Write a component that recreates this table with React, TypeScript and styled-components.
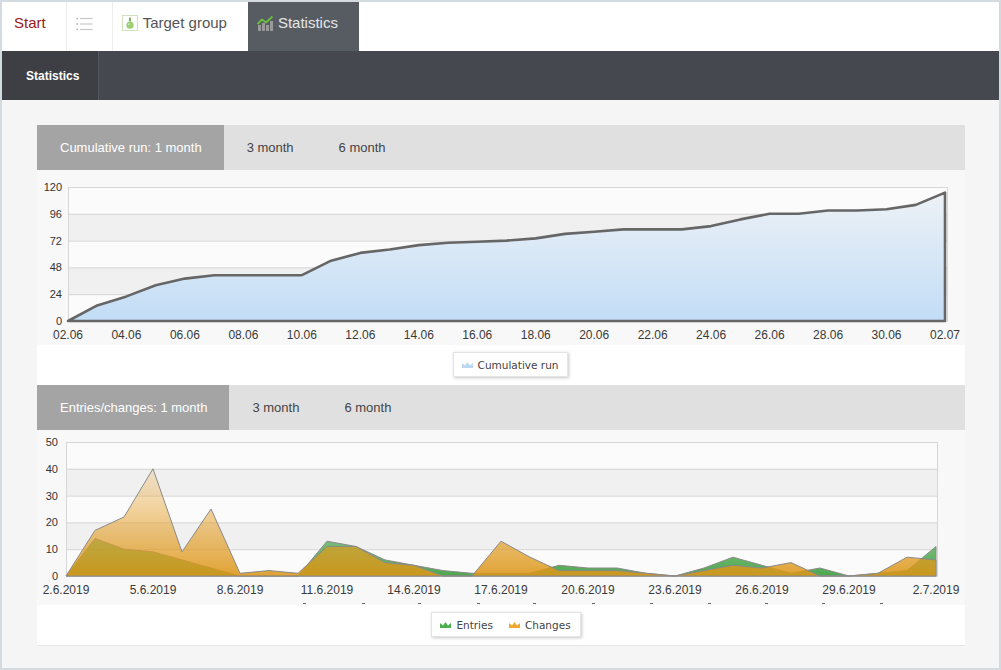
import React from 'react';
import styled, { createGlobalStyle } from 'styled-components';

// -- global --
const GlobalStyle = createGlobalStyle`
  body {
    margin: 0;
    background: #ffffff;
    font-family: 'Liberation Sans', Arial, sans-serif;
  }
`;

// -- data --
const cumulativeRun = [
  0, 14, 22, 32, 38, 41, 41, 41, 41, 54, 61, 64, 68, 70, 71, 72, 74, 78, 80, 82,
  82, 82, 85, 91, 96, 96, 99, 99, 100, 104, 115,
];

const entries = [
  0, 14, 10, 9, 6, 3, 0, 0, 0, 13, 11, 6, 4, 2, 1, 1, 1, 4, 3, 3, 1, 0, 3, 7, 4,
  1, 3, 0, 1, 2, 11,
];

const changes = [
  0, 17, 22, 40, 9, 25, 1, 2, 1, 11, 11, 5, 4, 0, 0, 13, 7, 2, 2, 2, 1, 0, 2, 4,
  3, 5, 0, 0, 1, 7, 6,
];

const runLabels = [
  '02.06', '04.06', '06.06', '08.06', '10.06', '12.06', '14.06', '16.06',
  '18.06', '20.06', '22.06', '24.06', '26.06', '28.06', '30.06', '02.07',
].map((text, i) => ({ index: i * 2, text }));

const entryLabels = [
  '2.6.2019', '5.6.2019', '8.6.2019', '11.6.2019', '14.6.2019', '17.6.2019',
  '20.6.2019', '23.6.2019', '26.6.2019', '29.6.2019', '2.7.2019',
].map((text, i) => ({ index: i * 3, text }));

const entryDashes = [266, 325, 381, 440, 496, 555, 613, 671, 728, 785, 843];

// -- styles --
const Frame = styled.div`
  display: flex;
  flex-direction: column;
  width: 1001px;
  height: 670px;
  box-sizing: border-box;
  border: 2px solid #d3dbe1;
  background: #f5f5f5;
  overflow: hidden;
`;

const TopNav = styled.nav`
  display: flex;
  height: 49px;
  background: #ffffff;
`;

const NavItem = styled.div<{ $active?: boolean }>`
  display: flex;
  align-items: flex-start;
  gap: 5px;
  padding: 12px 21px 0 9px;
  font-size: 15px;
  line-height: 18px;
  color: ${(props): string => (props.$active ? '#e4e6e8' : '#555555')};
  background: ${(props): string => (props.$active ? '#575c63' : '#ffffff')};
  box-sizing: border-box;
`;

const StartItem = styled(NavItem)`
  padding-left: 12px;
  padding-right: 20px;
  color: #962020;
  border-right: 1px solid #ededed;
`;

const IconItem = styled(NavItem)`
  padding: 15px 19px 0 9px;
  border-right: 1px solid #ededed;
`;

const SubNav = styled.div`
  display: flex;
  height: 49px;
  background: #46484f;
`;

const SubTab = styled.div`
  display: flex;
  align-items: center;
  padding: 0 19px 0 24px;
  background: #3d3f45;
  border-right: 1px solid #55575d;
  color: #ffffff;
  font-size: 12px;
  font-weight: bold;
`;

const Content = styled.main`
  flex: 1;
  padding: 25px 0 0 35px;
`;

const Card = styled.section`
  display: flex;
  flex-direction: column;
  width: 928px;
  background: #ffffff;
  border-bottom: 1px solid #e6e6e6;
`;

const TabBar = styled.div`
  display: flex;
  height: 45px;
  background: #e0e0e0;
`;

const Tab = styled.div<{ $active?: boolean }>`
  display: flex;
  align-items: center;
  padding: 0 22px 0 23px;
  font-size: 13px;
  color: ${(props): string => (props.$active ? '#ffffff' : '#444444')};
  background: ${(props): string => (props.$active ? '#a4a4a4' : 'transparent')};
`;

const ChartArea = styled.div`
  height: 175px;
  background: #f8f8f8;

  svg {
    display: block;
  }
`;

const LegendArea = styled.div<{ $offset: number }>`
  display: flex;
  justify-content: center;
  padding: 7px 0 8px ${(props): number => props.$offset}px;
`;

const Legend = styled.div`
  display: flex;
  align-items: center;
  gap: 16px;
  height: 25px;
  box-sizing: border-box;
  padding: 0 9px 0 8px;
  background: #ffffff;
  border: 1px solid #e4e4e4;
  box-shadow: 1px 1px 3px rgba(0, 0, 0, 0.22);
  font-family: 'DejaVu Sans', Verdana, sans-serif;
  font-size: 10.5px;
  color: #444444;
`;

const LegendItem = styled.span`
  display: flex;
  align-items: center;
  gap: 5px;
`;

// -- icons --
const ListIcon: React.FC = () => (
  <svg width="17" height="14" viewBox="0 0 17 14">
    {[1.5, 7, 12.5].map((y) => (
      <g key={y}>
        <circle cx="1.2" cy={y} r="1.1" fill="#c2c2c2" />
        <line x1="4" y1={y} x2="16.5" y2={y} stroke="#c8c8c8" strokeWidth="1.2" />
      </g>
    ))}
  </svg>
);

const TargetIcon: React.FC = () => (
  <svg width="16" height="16" viewBox="0 0 16 16" style={{ marginTop: 1 }}>
    <rect x="0.5" y="0.5" width="15" height="15" fill="#ffffff" stroke="#cfe2bb" />
    <rect x="7.2" y="2.5" width="1.6" height="4" fill="#5e9e3e" />
    <circle cx="8" cy="10.2" r="3.6" fill="#9ccf74" />
    <circle cx="6.9" cy="9.2" r="1" fill="#c9e8b3" />
  </svg>
);

const StatsIcon: React.FC = () => (
  <svg width="16" height="16" viewBox="0 0 16 16" style={{ marginTop: 1 }}>
    <rect x="1" y="10" width="3" height="6" fill="#9a9a9a" />
    <rect x="5" y="8" width="3" height="8" fill="#9a9a9a" />
    <rect x="9" y="10" width="3" height="6" fill="#9a9a9a" />
    <rect x="13" y="6" width="3" height="10" fill="#9a9a9a" />
    <polyline
      points="0.5,9 5,4.5 9,7.5 15.5,1.5"
      fill="none"
      stroke="#6cbf3c"
      strokeWidth="1.9"
      strokeLinejoin="round"
    />
  </svg>
);

const LegendSymbol: React.FC<{ color: string }> = ({ color }) => (
  <svg width="11" height="7" viewBox="0 0 11 7">
    <path d="M0 7 L0 2 L3 4.5 L5.5 1 L8 4.5 L11 2 L11 7 Z" fill={color} />
  </svg>
);

// -- chart --
interface Series {
  values: number[];
  fill: string;
  stroke: string;
  strokeWidth: number;
}

interface ChartProps {
  plot: { left: number; right: number; top: number; bottom: number };
  firstX: number;
  step: number;
  yTicks: number[];
  yLabelX: number;
  xLabels: { index: number; text: string }[];
  xLabelY: number;
  series: Series[];
  gradients: React.ReactNode;
  dashes?: number[];
}

const AreaChart: React.FC<ChartProps> = ({
  plot,
  firstX,
  step,
  yTicks,
  yLabelX,
  xLabels,
  xLabelY,
  series,
  gradients,
  dashes = [],
}) => {
  const yMax = yTicks[yTicks.length - 1];
  const yAt = (v: number): number =>
    plot.bottom - (v / yMax) * (plot.bottom - plot.top);
  const xAt = (i: number): number => firstX + i * step;

  const areaPath = (values: number[]): string => {
    const pts = values.map((v, i) => `L${xAt(i).toFixed(1)} ${yAt(v).toFixed(1)}`);
    return `M${xAt(0)} ${plot.bottom} ${pts.join(' ')} L${xAt(values.length - 1).toFixed(
      1,
    )} ${plot.bottom} Z`;
  };

  return (
    <svg width="928" height="175" viewBox="0 0 928 175">
      <defs>{gradients}</defs>
      <rect
        x={plot.left}
        y={plot.top}
        width={plot.right - plot.left}
        height={plot.bottom - plot.top}
        fill="#fbfbfb"
      />
      {yTicks.slice(0, -1).map((t, k) =>
        k % 2 === 1 ? (
          <rect
            key={`band-${t}`}
            x={plot.left}
            y={yAt(yTicks[k + 1])}
            width={plot.right - plot.left}
            height={yAt(t) - yAt(yTicks[k + 1])}
            fill="#f0f0f0"
          />
        ) : null,
      )}
      {yTicks.map((t) => (
        <g key={`tick-${t}`}>
          <line
            x1={plot.left}
            x2={plot.right}
            y1={yAt(t) + 0.5}
            y2={yAt(t) + 0.5}
            stroke="#d6d6d6"
          />
          <text
            x={yLabelX}
            y={yAt(t) + 4}
            textAnchor="end"
            fontSize="11"
            fontFamily="'Liberation Sans', Arial, sans-serif"
            fill="#333333"
          >
            {t}
          </text>
        </g>
      ))}
      <line
        x1={plot.left + 0.5}
        x2={plot.left + 0.5}
        y1={plot.top}
        y2={plot.bottom}
        stroke="#d6d6d6"
      />
      <line
        x1={plot.right - 0.5}
        x2={plot.right - 0.5}
        y1={plot.top}
        y2={plot.bottom}
        stroke="#d6d6d6"
      />
      {series.map((s, i) => (
        <path
          key={`series-${i}`}
          d={areaPath(s.values)}
          fill={s.fill}
          stroke={s.stroke}
          strokeWidth={s.strokeWidth}
          strokeLinejoin="round"
        />
      ))}
      {xLabels.map((l) => (
        <text
          key={l.text}
          x={xAt(l.index)}
          y={xLabelY}
          textAnchor="middle"
          fontSize="12"
          fontFamily="'Liberation Sans', Arial, sans-serif"
          fill="#3a3a3a"
        >
          {l.text}
        </text>
      ))}
      {dashes.map((x) => (
        <line key={`dash-${x}`} x1={x} x2={x + 3} y1={173.5} y2={173.5} stroke="#666666" />
      ))}
    </svg>
  );
};

// -- page --
const App: React.FC = () => {
  return (
    <>
      <GlobalStyle />
      <Frame>
        <TopNav>
          <StartItem>Start</StartItem>
          <IconItem>
            <ListIcon />
          </IconItem>
          <NavItem>
            <TargetIcon />
            Target group
          </NavItem>
          <NavItem $active>
            <StatsIcon />
            Statistics
          </NavItem>
        </TopNav>
        <SubNav>
          <SubTab>Statistics</SubTab>
        </SubNav>
        <Content>
          <Card>
            <TabBar>
              <Tab $active>Cumulative run: 1 month</Tab>
              <Tab>3 month</Tab>
              <Tab>6 month</Tab>
            </TabBar>
            <ChartArea>
              <AreaChart
                plot={{ left: 31, right: 911, top: 17, bottom: 151 }}
                firstX={31}
                step={(908 - 31) / 30}
                yTicks={[0, 24, 48, 72, 96, 120]}
                yLabelX={25}
                xLabels={runLabels}
                xLabelY={169}
                gradients={
                  <linearGradient
                    id="runFill"
                    gradientUnits="userSpaceOnUse"
                    x1="0"
                    y1="17"
                    x2="0"
                    y2="151"
                  >
                    <stop offset="0" stopColor="#eff2f6" />
                    <stop offset="1" stopColor="#c2ddf6" />
                  </linearGradient>
                }
                series={[
                  {
                    values: cumulativeRun,
                    fill: 'url(#runFill)',
                    stroke: '#666666',
                    strokeWidth: 2.6,
                  },
                ]}
              />
            </ChartArea>
            <LegendArea $offset={19}>
              <Legend>
                <LegendItem>
                  <LegendSymbol color="#bcd8f1" />
                  Cumulative run
                </LegendItem>
              </Legend>
            </LegendArea>
            <TabBar>
              <Tab $active>Entries/changes: 1 month</Tab>
              <Tab>3 month</Tab>
              <Tab>6 month</Tab>
            </TabBar>
            <ChartArea>
              <AreaChart
                plot={{ left: 29, right: 901, top: 12, bottom: 146 }}
                firstX={29}
                step={29}
                yTicks={[0, 10, 20, 30, 40, 50]}
                yLabelX={21}
                xLabels={entryLabels}
                xLabelY={164}
                dashes={entryDashes}
                gradients={
                  <>
                    <linearGradient
                      id="entriesFill"
                      gradientUnits="userSpaceOnUse"
                      x1="0"
                      y1="12"
                      x2="0"
                      y2="146"
                    >
                      <stop offset="0" stopColor="#4cb04c" stopOpacity="0.05" />
                      <stop offset="1" stopColor="#3a9e3a" stopOpacity="0.9" />
                    </linearGradient>
                    <linearGradient
                      id="changesFill"
                      gradientUnits="userSpaceOnUse"
                      x1="0"
                      y1="12"
                      x2="0"
                      y2="146"
                    >
                      <stop offset="0" stopColor="#f0ae46" stopOpacity="0.05" />
                      <stop offset="1" stopColor="#dc9618" stopOpacity="0.88" />
                    </linearGradient>
                  </>
                }
                series={[
                  {
                    values: entries,
                    fill: 'url(#entriesFill)',
                    stroke: '#8a8a8a',
                    strokeWidth: 1,
                  },
                  {
                    values: changes,
                    fill: 'url(#changesFill)',
                    stroke: '#8a8a8a',
                    strokeWidth: 1,
                  },
                ]}
              />
            </ChartArea>
            <LegendArea $offset={10}>
              <Legend>
                <LegendItem>
                  <LegendSymbol color="#4caf50" />
                  Entries
                </LegendItem>
                <LegendItem>
                  <LegendSymbol color="#f0a830" />
                  Changes
                </LegendItem>
              </Legend>
            </LegendArea>
          </Card>
        </Content>
      </Frame>
    </>
  );
};

export default App;
